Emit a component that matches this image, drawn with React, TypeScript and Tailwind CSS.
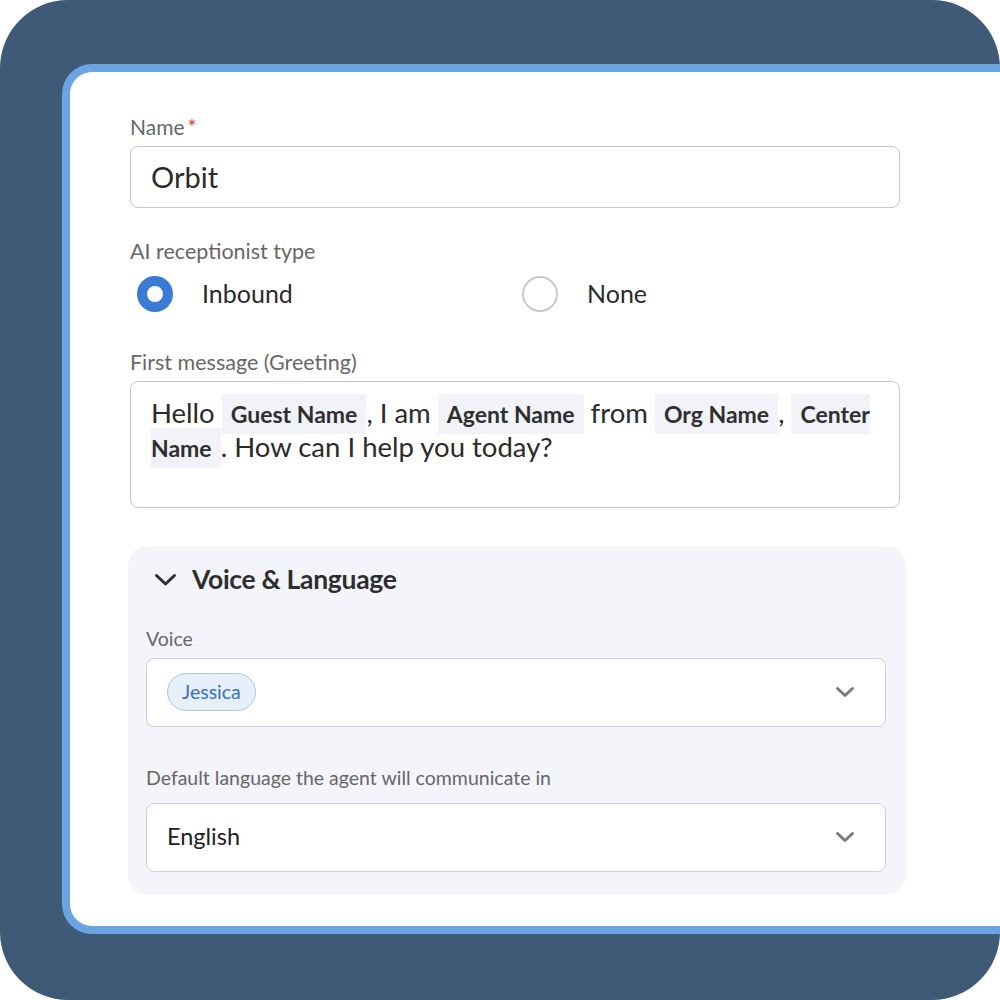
import React from "react";

const font = { fontFamily: "Lato, 'Noto Sans', sans-serif" };

function Chevron({ className }: { className?: string }) {
  return (
    <svg width="20" height="12" viewBox="0 0 20 12" fill="none" className={className}>
      <path d="M2.5 2.5 L10 9.5 L17.5 2.5" stroke="currentColor" strokeWidth="3" strokeLinecap="round" strokeLinejoin="round" />
    </svg>
  );
}

function Tag({ children }: { children: React.ReactNode }) {
  return (
    <span className="bg-[#f2f3f8] font-bold text-[23px] leading-[20px] text-[#2f2f2f] px-[9px] py-[6px]">
      {children}
    </span>
  );
}

function Radio({ checked, label }: { checked?: boolean; label: string }) {
  return (
    <div className="flex items-center gap-[29px]">
      {checked ? (
        <span className="w-[36px] h-[36px] rounded-full border-[10px] border-[#3b7bd6] bg-white" />
      ) : (
        <span className="w-[36px] h-[36px] rounded-full border-2 border-[#c9c9cc] bg-white" />
      )}
      <span className="text-[25px] text-[#2b2b2b]">{label}</span>
    </div>
  );
}

export default function App() {
  return (
    <div style={font} className="w-[1000px] h-[1000px] bg-[#3e5a76] rounded-[68px] overflow-hidden pt-[64px] pl-[62px]">
      <div className="w-[960px] h-[870px] bg-white border-[8px] border-r-0 border-[#6aa5e2] rounded-l-[30px] pl-[60px] pt-[43px]">
        <div className="w-[770px]">
          {/* Name */}
          <div className="text-[21px] leading-[24px] text-[#676767]">
            Name<span className="text-[#d9403a] ml-[3px]">*</span>
          </div>
          <div className="mt-[7px] h-[62px] rounded-[8px] border-[1.5px] border-[#c3c6d1] flex items-center px-[20px] text-[29px] text-[#2b2b2b]">
            Orbit
          </div>

          {/* Type */}
          <div className="mt-[31px] text-[21.5px] leading-[24px] text-[#676767]">AI receptionist type</div>
          <div className="mt-[12px] flex pl-[7px]">
            <div className="w-[385px]">
              <Radio checked label="Inbound" />
            </div>
            <Radio label="None" />
          </div>

          {/* Greeting */}
          <div className="mt-[37px] text-[21.5px] leading-[24px] text-[#676767]">First message (Greeting)</div>
          <div className="mt-[7px] h-[127px] rounded-[8px] border-[1.5px] border-[#c3c6d1] pl-[20px] pr-[18px] pt-[14px] text-[27.5px] leading-[34px] text-[#2b2b2b]">
            Hello <Tag>Guest Name</Tag>, I am <Tag>Agent Name</Tag> from <Tag>Org Name</Tag>, <Tag>Center Name</Tag>. How can I help you today?
          </div>
        </div>

        {/* Voice & Language */}
        <div className="mt-[38px] -ml-[2px] w-[778px] h-[349px] bg-[#f4f5fa] rounded-[20px] px-[18px] pt-[16px]">
          <div className="flex items-center h-[36px] pl-[8px] gap-[15px] text-[#2e2e2e]">
            <svg width="23" height="14" viewBox="0 0 23 14" fill="none">
              <path d="M2.5 2.5 L11.5 11 L20.5 2.5" stroke="currentColor" strokeWidth="3" strokeLinecap="round" strokeLinejoin="round" />
            </svg>
            <span className="text-[26.5px] font-bold tracking-[-0.3px]">Voice &amp; Language</span>
          </div>

          <div className="mt-[30px] text-[19.5px] leading-[22px] text-[#676767]">Voice</div>
          <div className="mt-[8px] w-[740px] h-[69px] bg-white rounded-[8px] border-[1.5px] border-[#cdd0da] flex items-center justify-between pl-[20px] pr-[30px]">
            <span className="h-[38px] flex items-center px-[14px] rounded-full bg-[#e7eff9] border-[1.5px] border-[#a9c8ec] text-[19.5px] text-[#3572c0]">
              Jessica
            </span>
            <Chevron className="text-[#7a7a7a]" />
          </div>

          <div className="mt-[40px] text-[19.5px] leading-[22px] text-[#676767]">Default language the agent will communicate in</div>
          <div className="mt-[14px] w-[740px] h-[69px] bg-white rounded-[8px] border-[1.5px] border-[#cdd0da] flex items-center justify-between pl-[20px] pr-[30px]">
            <span className="text-[23.5px] text-[#222]">English</span>
            <Chevron className="text-[#7a7a7a]" />
          </div>
        </div>
      </div>
    </div>
  );
}
